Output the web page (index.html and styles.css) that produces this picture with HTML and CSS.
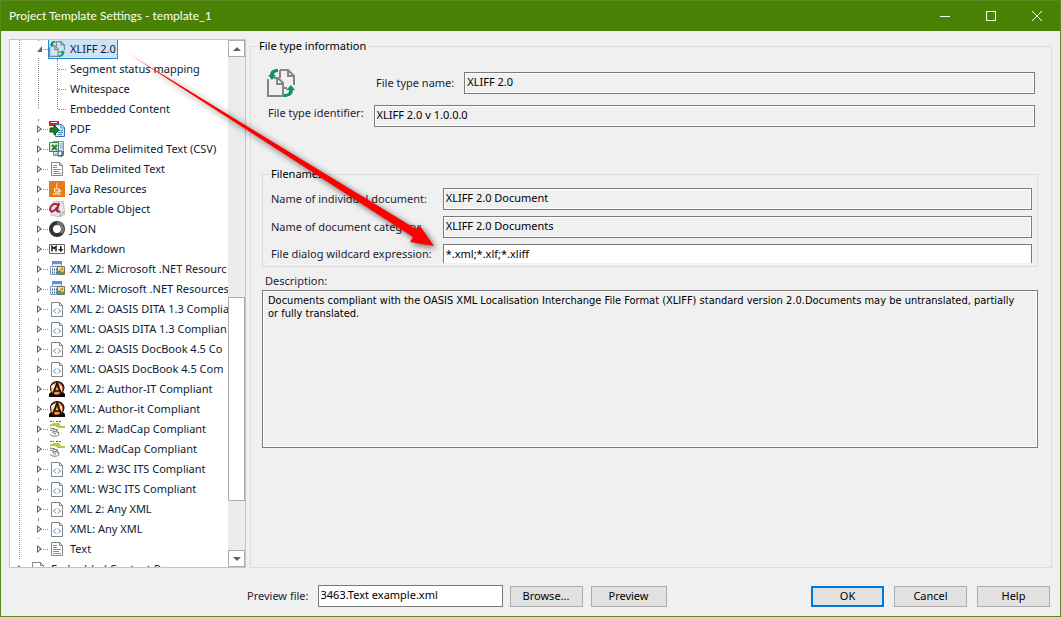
FILE: index.html
```html
<!DOCTYPE html>
<html lang="en">
	<head>
		<title>Project Template Settings</title>
		<meta charset="UTF-8">
		<link rel="stylesheet" href="styles.css">
	</head>

	<body>
		<!-- icons used more than once -->
		<svg class="defs" aria-hidden="true">
			<symbol id="i-xliff" viewBox="0 0 28 28">
				<path d="M13 1h8l6 6v9M21 1v6h6M1 10v17h15V14l-5-5H7M10 9v6h6M17 19h3" fill="none" stroke="#858585" stroke-width="2"/>
				<path d="M13 9V1" stroke="#858585" stroke-width="2"/>
				<path d="M11 0v3C8 3 7 4 7 6h2l-4 5-4-5h2C3 2 6 0 11 0zM17 28v-3c4 0 5-1 5-4h-3l5-5 4 5h-2c0 5-4 7-9 7z" fill="#119560"/>
			</symbol>
			<symbol id="i-doc" viewBox="0 0 16 16">
				<path d="M2.500 1.500h8l3 3v10h-11zM10.500 1.500v3h3" fill="#fff" stroke="#858585"/>
				<path d="M4 4.500h4M4 6.500h4M4 8.500h8M4 10.500h6M4 12.500h8" stroke="#8e8e8e"/>
			</symbol>
			<symbol id="i-xml" viewBox="0 0 16 16">
				<path d="M2.500 1.500h8l3 3v11h-11zM10.500 1.500v3h3" fill="#fff" stroke="#858585"/>
				<path d="M7 7.500L4.500 10 7 12.500M9 7.500l2.500 2.500L9 12.500" fill="none" stroke="#4b86bd"/>
			</symbol>
			<symbol id="i-net" viewBox="0 0 16 16">
				<path d="M3.500.5h9v6h-9z" fill="#dce9fa" stroke="#84aadb"/>
				<path d="M3 0h10v3H3z" fill="#5d93dc"/>
				<path d="M1.500 5.500h9v8h-9z" fill="#f5f8fc" stroke="#8296b8"/>
				<path d="M3 8.500h6M3 11.500h6" stroke="#405f91" stroke-width="2" stroke-dasharray="1 1"/>
				<path d="M8.500 5.500h7v8h-7z" fill="#f4e6a6" stroke="#7b7558"/>
				<path d="M9 13v-3l2-1 2 2 2-1v3z" fill="#50a064"/>
				<circle cx="13" cy="8" r="1.500" fill="#e98632"/>
			</symbol>
			<symbol id="i-author" viewBox="0 0 16 16">
				<path d="M0 16v-3l2-2C-1 5 3 0 8 0s10 5 6 11l2 2v3z" fill="#0d0a09"/>
				<circle cx="8" cy="7.500" r="6.500" fill="#c4481e"/>
				<path d="M2 9c1 4 5 6 9 3L9 8z" fill="#f29a35"/>
				<path d="M2 5l5-3-1 4-3 4zM10 2l3 4v5l-2-4z" fill="#fff0cf"/>
				<path d="M3 16L8 2l5 14M5 10h7" fill="none" stroke="#111" stroke-width="1.500"/>
				<path d="M8 6l1 3H7z" fill="#f5c078"/>
			</symbol>
			<symbol id="i-madcap" viewBox="0 0 16 16">
				<path d="M1 .5h4M7 .5h5" stroke="#527229" stroke-dasharray="2 1"/>
				<path d="M0 4l5-2h5l2 3h4v2H9L6 5H1z" fill="#abd035"/>
				<path d="M1 7l5 1 4 4M1 9l6 2M1 13c1 3 9 3 9 0 0-2-4-3-6-2-1 1 1 2 3 2M4 8l5 1" fill="none" stroke="#777"/>
			</symbol>
		</svg>

		<div class="window">
			<header class="titlebar">
				<h1>Project Template Settings - template_1</h1>
				<div class="window_buttons">
					<button type="button" aria-label="Minimize"><svg width="10" height="10"><path d="M0 5.500h10"/></svg></button>
					<button type="button" aria-label="Maximize"><svg width="10" height="10"><path d="M.5.5h9v9h-9z"/></svg></button>
					<button type="button" aria-label="Close"><svg width="10" height="10"><path d="M0 0l10 10M10 0L0 10"/></svg></button>
				</div>
			</header>

			<main>
				<nav class="tree">
					<div class="tree_view">
						<ul class="types">
							<li>
								<div class="row"><button class="toggle open" aria-label="Collapse"></button><a href="#" class="selected"><svg><use href="#i-xliff"/></svg><span>XLIFF 2.0</span></a></div>
								<ul class="pages">
									<li><a href="#">Segment status mapping</a></li>
									<li><a href="#">Whitespace</a></li>
									<li><a href="#">Embedded Content</a></li>
								</ul>
							</li>
							<li><div class="row"><button class="toggle" aria-label="Expand"></button><a href="#">
								<svg viewBox="0 0 16 16"><path d="M0 0h10v5H0z" fill="#e31b1b"/><path d="M2 1.500h6" stroke="#fff"/><path d="M6.500 3.500h6l3 3v9h-9z" fill="#dbeaff" stroke="#3571b7"/><path d="M12 4v3h3M9 9.500h5M9 11.500h5M9 13.500h4" fill="none" stroke="#4788cd"/><path d="M1 7h4V4l5 5-5 5v-3H1z" fill="#178321" stroke="#07570e"/></svg><span>PDF</span></a></div></li>
							<li><div class="row"><button class="toggle" aria-label="Expand"></button><a href="#">
								<svg viewBox="0 0 16 16"><path d="M4.500.5h10v14h-10z" fill="#eaf3ff" stroke="#7895b8"/><path d="M.5 1.500h9v9h-9z" fill="#dff0d8" stroke="#388348"/><path d="M3 4l5 5M8 4L3 9" stroke="#288039" stroke-width="2"/><path d="M11 3h3M11 5h3M11 7h3M4 13h4" stroke="#7395bd"/><path d="M9 10h4v5H9zM14 10v4l-2 2" fill="none" stroke="#344b73"/></svg><span>Comma Delimited Text (CSV)</span></a></div></li>
							<li><div class="row"><button class="toggle" aria-label="Expand"></button><a href="#"><svg><use href="#i-doc"/></svg><span>Tab Delimited Text</span></a></div></li>
							<li><div class="row"><button class="toggle" aria-label="Expand"></button><a href="#">
								<svg viewBox="0 0 16 16"><path d="M0 0h16v16H0z" fill="#e67a16"/><path d="M9 2C6 4 9 5 7 7M5 8h5v3H6zM10 9c3 0 2 2 0 2M4 13h8" fill="none" stroke="#fff"/></svg><span>Java Resources</span></a></div></li>
							<li><div class="row"><button class="toggle" aria-label="Expand"></button><a href="#">
								<svg viewBox="0 0 16 16"><path d="M4 1l10-1 2 13-5 3-9-2z" fill="#e7e7e9" stroke="#bbb"/><path d="M11 12l4-1-4 4z" fill="#fff" stroke="#aaa"/><path d="M10 2L8 9c0 2 1 2 3 1M9 4C5 1 1 5 1 8c0 4 5 3 7-2" fill="none" stroke="#b01939" stroke-width="2"/></svg><span>Portable Object</span></a></div></li>
							<li><div class="row"><button class="toggle" aria-label="Expand"></button><a href="#">
								<svg viewBox="0 0 16 16"><circle cx="8" cy="8" r="6" fill="none" stroke="#333" stroke-width="4"/><path d="M8 2a6 6 0 0 1 4 10" fill="none" stroke="#777" stroke-width="3"/></svg><span>JSON</span></a></div></li>
							<li><div class="row"><button class="toggle" aria-label="Expand"></button><a href="#">
								<svg viewBox="0 0 16 16"><path d="M.5 3.500h15v9H.5z" fill="#fff" stroke="#666"/><path d="M3 10.500v-5l2 2 2-2v5" fill="none" stroke="#222" stroke-width="1.500"/><path d="M11 5h1.500v3h2l-2.700 3L9 8h2z" fill="#222"/></svg><span>Markdown</span></a></div></li>
							<li><div class="row"><button class="toggle" aria-label="Expand"></button><a href="#"><svg><use href="#i-net"/></svg><span>XML 2: Microsoft .NET Resourc</span></a></div></li>
							<li><div class="row"><button class="toggle" aria-label="Expand"></button><a href="#"><svg><use href="#i-net"/></svg><span>XML: Microsoft .NET Resources</span></a></div></li>
							<li><div class="row"><button class="toggle" aria-label="Expand"></button><a href="#"><svg><use href="#i-xml"/></svg><span>XML 2: OASIS DITA 1.3 Complia</span></a></div></li>
							<li><div class="row"><button class="toggle" aria-label="Expand"></button><a href="#"><svg><use href="#i-xml"/></svg><span>XML: OASIS DITA 1.3 Complian</span></a></div></li>
							<li><div class="row"><button class="toggle" aria-label="Expand"></button><a href="#"><svg><use href="#i-xml"/></svg><span>XML 2: OASIS DocBook 4.5 Co</span></a></div></li>
							<li><div class="row"><button class="toggle" aria-label="Expand"></button><a href="#"><svg><use href="#i-xml"/></svg><span>XML: OASIS DocBook 4.5 Com</span></a></div></li>
							<li><div class="row"><button class="toggle" aria-label="Expand"></button><a href="#"><svg><use href="#i-author"/></svg><span>XML 2: Author-IT Compliant</span></a></div></li>
							<li><div class="row"><button class="toggle" aria-label="Expand"></button><a href="#"><svg><use href="#i-author"/></svg><span>XML: Author-it Compliant</span></a></div></li>
							<li><div class="row"><button class="toggle" aria-label="Expand"></button><a href="#"><svg><use href="#i-madcap"/></svg><span>XML 2: MadCap Compliant</span></a></div></li>
							<li><div class="row"><button class="toggle" aria-label="Expand"></button><a href="#"><svg><use href="#i-madcap"/></svg><span>XML: MadCap Compliant</span></a></div></li>
							<li><div class="row"><button class="toggle" aria-label="Expand"></button><a href="#"><svg><use href="#i-xml"/></svg><span>XML 2: W3C ITS Compliant</span></a></div></li>
							<li><div class="row"><button class="toggle" aria-label="Expand"></button><a href="#"><svg><use href="#i-xml"/></svg><span>XML: W3C ITS Compliant</span></a></div></li>
							<li><div class="row"><button class="toggle" aria-label="Expand"></button><a href="#"><svg><use href="#i-xml"/></svg><span>XML 2: Any XML</span></a></div></li>
							<li><div class="row"><button class="toggle" aria-label="Expand"></button><a href="#"><svg><use href="#i-xml"/></svg><span>XML: Any XML</span></a></div></li>
							<li><div class="row"><button class="toggle" aria-label="Expand"></button><a href="#"><svg><use href="#i-doc"/></svg><span>Text</span></a></div></li>
						</ul>
						<div class="row root"><button class="toggle" aria-label="Expand"></button><a href="#"><svg><use href="#i-xml"/></svg><span>Embedded Content Processors</span></a></div>
					</div>
					<div class="scrollbar">
						<button type="button" aria-label="Scroll up"><svg width="8" height="4"><path d="M0 4l4-4 4 4z"/></svg></button>
						<div class="track"><div class="thumb"></div></div>
						<button type="button" aria-label="Scroll down"><svg width="8" height="4"><path d="M0 0l4 4 4-4z"/></svg></button>
					</div>
				</nav>

				<fieldset class="info">
					<legend>File type information</legend>
					<div class="line name_line">
						<svg class="type_icon"><use href="#i-xliff"/></svg>
						<label for="type_name">File type name:</label>
						<input type="text" id="type_name" value="XLIFF 2.0" readonly>
					</div>
					<div class="line id_line">
						<label for="type_id">File type identifier:</label>
						<input type="text" id="type_id" value="XLIFF 2.0 v 1.0.0.0" readonly>
					</div>
					<fieldset class="filenames">
						<legend>Filenames</legend>
						<label for="doc_name">Name of individual document:</label>
						<input type="text" id="doc_name" value="XLIFF 2.0 Document" readonly>
						<label for="doc_category">Name of document category:</label>
						<input type="text" id="doc_category" value="XLIFF 2.0 Documents" readonly>
						<label for="wildcard">File dialog wildcard expression:</label>
						<input type="text" id="wildcard" value="*.xml;*.xlf;*.xliff">
					</fieldset>
					<label class="description_label" for="description">Description:</label>
					<textarea id="description" readonly>Documents compliant with the OASIS XML Localisation Interchange File Format (XLIFF) standard version 2.0.Documents may be untranslated, partially or fully translated.</textarea>
				</fieldset>
			</main>

			<footer>
				<label for="preview_file">Preview file:</label>
				<input type="text" id="preview_file" value="3463.Text example.xml">
				<button type="button">Browse...</button>
				<button type="button" class="preview">Preview</button>
				<div class="dialog_buttons">
					<button type="button" class="default">OK</button>
					<button type="button">Cancel</button>
					<button type="button">Help</button>
				</div>
			</footer>

			<!-- pointer from the selected type to the wildcard field -->
			<svg class="arrow" width="460" height="270" aria-hidden="true">
				<defs>
					<linearGradient id="fade" gradientUnits="userSpaceOnUse" x1="116" y1="46" x2="165" y2="76">
						<stop offset="0" stop-color="#f00" stop-opacity="0"/>
						<stop offset="1" stop-color="#f00"/>
					</linearGradient>
				</defs>
				<path d="M121 49L250 128 416 229 420 226 434 246 410 242 413 237 250 132z" fill="url(#fade)"/>
			</svg>
		</div>
	</body>
</html>
```
FILE: styles.css
```css
*
	{
		box-sizing: border-box;
	}
body
	{
		margin: 0;
		font: 11px/16px "Noto Sans", "Open Sans", sans-serif;
		color: #1a1a1a;
		background: #f0f0f0;
	}
button, input, textarea
	{
		margin: 0;
		font: inherit;
		color: #000;
		border-radius: 0;
	}
ul
	{
		margin: 0;
		padding: 0;
		list-style: none;
	}
.defs
	{
		position: absolute;
		width: 0;
		height: 0;
	}
.window
	{
		position: relative;
		display: flex;
		flex-direction: column;
		min-height: 100vh;
		border: 1px solid #588b1c;
	}

/* title bar */
.titlebar
	{
		display: flex;
		height: 30px;
		align-items: center;
		justify-content: space-between;
		padding-left: 8px;
		color: #fff;
		background: #498205;
	}
.titlebar h1
	{
		margin: 0;
		font: 12px/16px Lato, sans-serif;
	}
.window_buttons
	{
		display: flex;
	}
.window_buttons button
	{
		display: grid;
		width: 46px;
		height: 28px;
		padding: 0;
		place-items: center;
		border: 0;
		background: none;
	}
.window_buttons path
	{
		fill: none;
		stroke: #fff;
	}

main
	{
		display: flex;
		flex: 1;
		gap: 4px;
		padding: 8px 8px 0;
	}

/* tree of file types */
.tree
	{
		display: flex;
		flex: none;
		width: 237px;
		height: 529px;
		border: 1px solid #bdc6d0;
		background: #fff;
	}
.tree_view
	{
		flex: 1;
		overflow: hidden;
	}
.tree a
	{
		display: flex;
		height: 20px;
		align-items: center;
		color: #0b1a33;
		white-space: nowrap;
		text-decoration: none;
	}
.types
	{
		margin: -1px 0 0 9px;
		border-left: 1px dotted #8c8c8c;
	}
.types > li
	{
		margin-left: 18px;
		border-left: 1px dotted #8c8c8c;
	}
.types > li:last-child
	{
		border-color: transparent;
	}
.row
	{
		display: flex;
		align-items: center;
		margin-left: -2px;
	}
.row::before
	{
		content: "";
		order: 1;
		flex: none;
		width: 5px;
		border-top: 1px dotted #8c8c8c;
	}
.row a
	{
		order: 2;
	}
.row svg
	{
		flex: none;
		width: 16px;
		height: 16px;
		margin: 0 5px 0 1px;
	}
.toggle
	{
		flex: none;
		width: 6px;
		height: 16px;
		padding: 0;
		border: 0;
		background: #fff;
	}
.toggle::before
	{
		content: "";
		display: block;
		width: 5px;
		height: 8px;
		background: #666;
		clip-path: polygon(0 0, 5px 4px, 0 8px, 0 0, 1px 2px, 1px 6px, 3px 4px, 1px 2px);
	}
.toggle.open::before
	{
		height: 6px;
		clip-path: polygon(100% 0, 100% 100%, 0 100%);
	}
.tree .selected
	{
		padding-right: 1px;
		border: 1px solid #2a8dd4;
		background: #cce4f7;
	}
.tree .selected svg
	{
		margin-left: 0;
	}
.pages
	{
		height: 50px;
		margin: 0 0 10px 18px;
		border-left: 1px dotted #8c8c8c;
	}
.pages a::before
	{
		content: "";
		width: 8px;
		margin-right: 4px;
		border-top: 1px dotted #8c8c8c;
	}
.root
	{
		margin-left: 8px;
	}
.scrollbar
	{
		display: flex;
		flex: none;
		flex-direction: column;
		width: 17px;
		background: #ececec;
	}
.scrollbar button
	{
		display: grid;
		height: 17px;
		padding: 0;
		place-items: center;
		border: 1px solid #adadad;
		background: #fff;
	}
.scrollbar path
	{
		fill: #606060;
	}
.track
	{
		display: flex;
		flex: 1;
		flex-direction: column;
		justify-content: flex-end;
		padding-bottom: 49px;
	}
.thumb
	{
		height: 46%;
		border: 1px solid #adadad;
		background: #fff;
	}

/* file type details */
fieldset
	{
		min-width: 0;
		margin: 0;
		border: 1px solid #dcdcdc;
	}
legend
	{
		padding: 0 2px;
		line-height: 14px;
		color: #000;
	}
label
	{
		color: #1e2432;
	}
input, textarea
	{
		border: 1px solid #7a7a7a;
		background: #fff;
	}
input
	{
		min-width: 0;
		height: 22px;
		padding: 0 2px 3px;
	}
input[readonly], textarea[readonly]
	{
		background: #f0f0f0;
		box-shadow: inset 0 0 0 1px #fff;
	}
.info
	{
		display: flex;
		flex: 1;
		flex-direction: column;
		padding: 0 13px 8px 11px;
	}
.info > legend
	{
		margin-left: -5px;
	}
.line
	{
		display: flex;
		align-items: center;
	}
.line input
	{
		flex: 1;
		margin: 0 3px 0 10px;
	}
.name_line
	{
		padding: 16px 0 8px 5px;
	}
.type_icon
	{
		width: 28px;
		height: 28px;
		margin-right: 81px;
	}
.id_line
	{
		align-items: flex-start;
		padding-left: 6px;
	}
.filenames
	{
		display: grid;
		grid-template-columns: auto 1fr;
		gap: 6px 11px;
		align-items: center;
		margin-top: 40px;
		padding: 7px 5px 3px 8px;
	}
.filenames legend
	{
		margin-left: -2px;
	}
#wildcard
	{
		height: 19px;
		padding-bottom: 1px;
		border-bottom: 0;
	}
.description_label
	{
		margin: 6px 0 1px;
		padding-left: 3px;
	}
textarea
	{
		height: 158px;
		padding: 3px 12px 3px 5px;
		font-family: "DejaVu Sans Condensed", "Noto Sans", sans-serif;
		line-height: 13px;
		resize: none;
	}

footer
	{
		display: flex;
		align-items: center;
		padding: 17px 10px 9px 246px;
	}
footer input
	{
		width: 185px;
		margin: 0 7px 0 9px;
	}
footer button
	{
		width: 73px;
		height: 21px;
		padding: 0;
		border: 1px solid #adadad;
		background: #e1e1e1;
	}
footer .preview
	{
		width: 76px;
		margin-left: 8px;
	}
.dialog_buttons
	{
		display: flex;
		gap: 10px;
		margin-left: auto;
	}
footer .default
	{
		border: 2px solid #0078d7;
	}

.arrow
	{
		position: absolute;
		top: -1px;
		left: -1px;
		pointer-events: none;
		filter: drop-shadow(2px 2px 3px rgba(0, 0, 0, .6));
	}
```
